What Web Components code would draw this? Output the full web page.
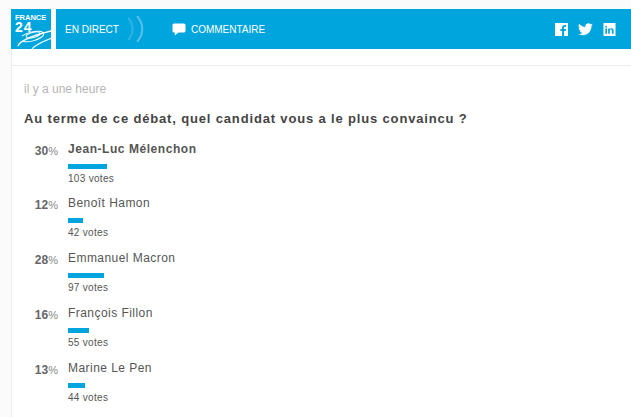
<!DOCTYPE html>
<html><head><meta charset="utf-8"><style>
html,body{margin:0;padding:0;background:#fbfbfb}
body{width:631px;height:417px;overflow:hidden;font-family:"Liberation Sans",Arial,sans-serif}
</style></head><body>
<f24-header></f24-header>
<f24-poll>
  <f24-option pct="30" votes="103 votes" w="39" bold>Jean-Luc Mélenchon</f24-option>
  <f24-option pct="12" votes="42 votes" w="15">Benoît Hamon</f24-option>
  <f24-option pct="28" votes="97 votes" w="36">Emmanuel Macron</f24-option>
  <f24-option pct="16" votes="55 votes" w="21">François Fillon</f24-option>
  <f24-option pct="13" votes="44 votes" w="17">Marine Le Pen</f24-option>
</f24-poll>
<script>
class F24Header extends HTMLElement{constructor(){super();this.attachShadow({mode:'open'}).innerHTML=`<style>
:host{display:flex;gap:5px;padding:9px 0 0 11px;height:40px;box-sizing:content-box;font-family:"Liberation Sans",Arial,sans-serif}
.logo{width:40px;height:40px;background:#00a5de;position:relative;overflow:hidden;flex:none;color:#fff}
.logo b{display:block;padding:5px 0 0 4px;font-size:7.500px;line-height:7px}
.logo b+b{padding:1px 0 0 4px;font-size:14px;line-height:10px;letter-spacing:1px}
.logo svg{position:absolute;left:0;top:0}
.bar{flex:1;background:#00a5de;display:flex;align-items:center;color:#fff;font-size:10px;padding-left:9px}
.waves{margin:0 27px 0 8px;display:block}
.bub{margin-right:5px;display:block}
.social{margin-left:auto;display:flex;align-items:center;gap:10px;padding-right:15px}
svg{display:block}
</style>
<div class="logo"><b>FRANCE</b><b>24</b>
<svg width="40" height="40" viewBox="0 0 40 40" fill="none" stroke="#fff">
<ellipse cx="22" cy="26" rx="7" ry="2.500" transform="rotate(-14 22 26)" stroke-width="1"/>
<ellipse cx="21" cy="27.500" rx="12" ry="4.500" transform="rotate(-14 21 27.500)" stroke-width="1" stroke-dasharray="24 7"/>
<path d="M7 37C9 31 24 26 40 22" stroke-width="1.300"/>
<path d="M21 40C25 35 33 32 41 29" stroke-width="1.300"/>
</svg></div>
<div class="bar"><span>EN DIRECT</span>
<svg class="waves" width="18" height="26" viewBox="0 0 18 26" fill="none" stroke-width="2"><path stroke="#34b0e2" d="M1 2C7 8 7 18 1 24"/><path stroke="#58bfe8" d="M10 0C17 8 17 18 10 26"/></svg>
<svg class="bub" width="14" height="13" viewBox="0 0 14 13"><path fill="#fff" d="M2 0.500H12Q13.500 .5 13.500 2V8Q13.500 9.500 12 9.500H6.500L2.800 12.500V9.500H2Q.5 9.500 .5 8V2Q.5 .5 2 .5Z"/></svg>
<span>COMMENTAIRE</span>
<div class="social">
<svg width="13" height="13" viewBox="0 0 14 14"><path fill="#fff" d="M0 0H14V14H9.800V8.600H11.600L11.900 6.500H9.800V5.200C9.800 4.500 10 4.100 10.900 4.100H12V2.200C11.700 2.200 11.100 2.100 10.300 2.100 8.700 2.100 7.600 3.100 7.600 4.900V6.500H5.800V8.600H7.600V14H0Z"/></svg>
<svg width="15" height="13" viewBox="0 0 24 20"><path fill="#fff" d="M24 2.400c-.9.4-1.800.7-2.800.8 1-.6 1.800-1.600 2.200-2.700-1 .6-2 1-3.100 1.200C19.300.7 18 0 16.600 0c-2.700 0-4.900 2.200-4.900 4.900 0 .4 0 .8.100 1.100C7.700 5.800 4.100 3.900 1.700.9c-.4.700-.7 1.600-.7 2.500 0 1.700.9 3.200 2.200 4.100-.8 0-1.600-.2-2.200-.6v.1c0 2.400 1.700 4.400 3.900 4.800-.4.100-.8.200-1.300.2-.3 0-.6 0-.9-.1.600 2 2.400 3.400 4.600 3.400-1.700 1.300-3.800 2.100-6.100 2.100-.4 0-.8 0-1.200-.1C2.200 18.200 4.800 19 7.500 19c9.100 0 14-7.500 14-14v-.6c1-.7 1.800-1.600 2.500-2z"/></svg>
<svg width="13" height="13" viewBox="0 0 13 14"><path fill-rule="evenodd" fill="#fff" d="M0 0H13V14H0ZM2 5.800V11.500H3.800V5.800ZM2.900 3A1 1 0 1 0 2.900 5 1 1 0 1 0 2.900 3ZM5 5.800V11.500H6.800V8.400C6.800 7.500 7.200 7.100 7.900 7.100S9 7.600 9 8.400V11.500H10.900V8C10.900 6.400 10 5.600 8.800 5.600 7.900 5.600 7.200 6 6.800 6.600V5.800Z"/></svg>
</div></div>`}}
customElements.define('f24-header',F24Header);
class F24Poll extends HTMLElement{constructor(){super();this.attachShadow({mode:'open'}).innerHTML=`<style>
:host{display:block;margin-left:11px;border-left:1px solid #ececec;background:#fff;padding-top:16px;height:368px;box-sizing:border-box;font-family:"Liberation Sans",Arial,sans-serif}
.body{border-top:1px solid #ececec;padding:16px 0 0 12px}
.time{font-size:12px;line-height:14px;color:#b5b5b5}
h1{margin:15px 0 15px;font-size:13px;line-height:16px;font-weight:700;color:#444;letter-spacing:.84px}
.list{display:flex;flex-direction:column}
::slotted(:first-child){height:54px}
</style><div class="body"><div class="time">il y a une heure</div><h1>Au terme de ce débat, quel candidat vous a le plus convaincu ?</h1><div class="list"><slot></slot></div></div>`}}
customElements.define('f24-poll',F24Poll);
class F24Option extends HTMLElement{constructor(){super();const a=n=>this.getAttribute(n);const s=this.attachShadow({mode:'open'});
s.innerHTML=`<style>
:host{display:grid;grid-template-columns:34px 1fr;column-gap:10px;height:55px;align-content:start;color:#555;font-family:"Liberation Sans",Arial,sans-serif}
.p{font-size:12px;line-height:14px;text-align:right;font-weight:700;color:#666;padding-top:2px}
.p span{font-size:11px;font-weight:400;color:#888}
.n{font-size:12px;line-height:14px;letter-spacing:.45px;color:#555}
:host([bold]) .n{font-weight:700;letter-spacing:.55px}
.bar{height:5px;background:#00a5de;margin-top:8px}
.v{font-size:10px;line-height:12px;margin-top:4px;color:#555;letter-spacing:.3px}
</style><div class="p">${a('pct')}<span>%</span></div><div><div class="n"><slot></slot></div><div class="bar" style="width:${a('w')}px"></div><div class="v">${a('votes')}</div></div>`}}
customElements.define('f24-option',F24Option);
</script></body></html>
